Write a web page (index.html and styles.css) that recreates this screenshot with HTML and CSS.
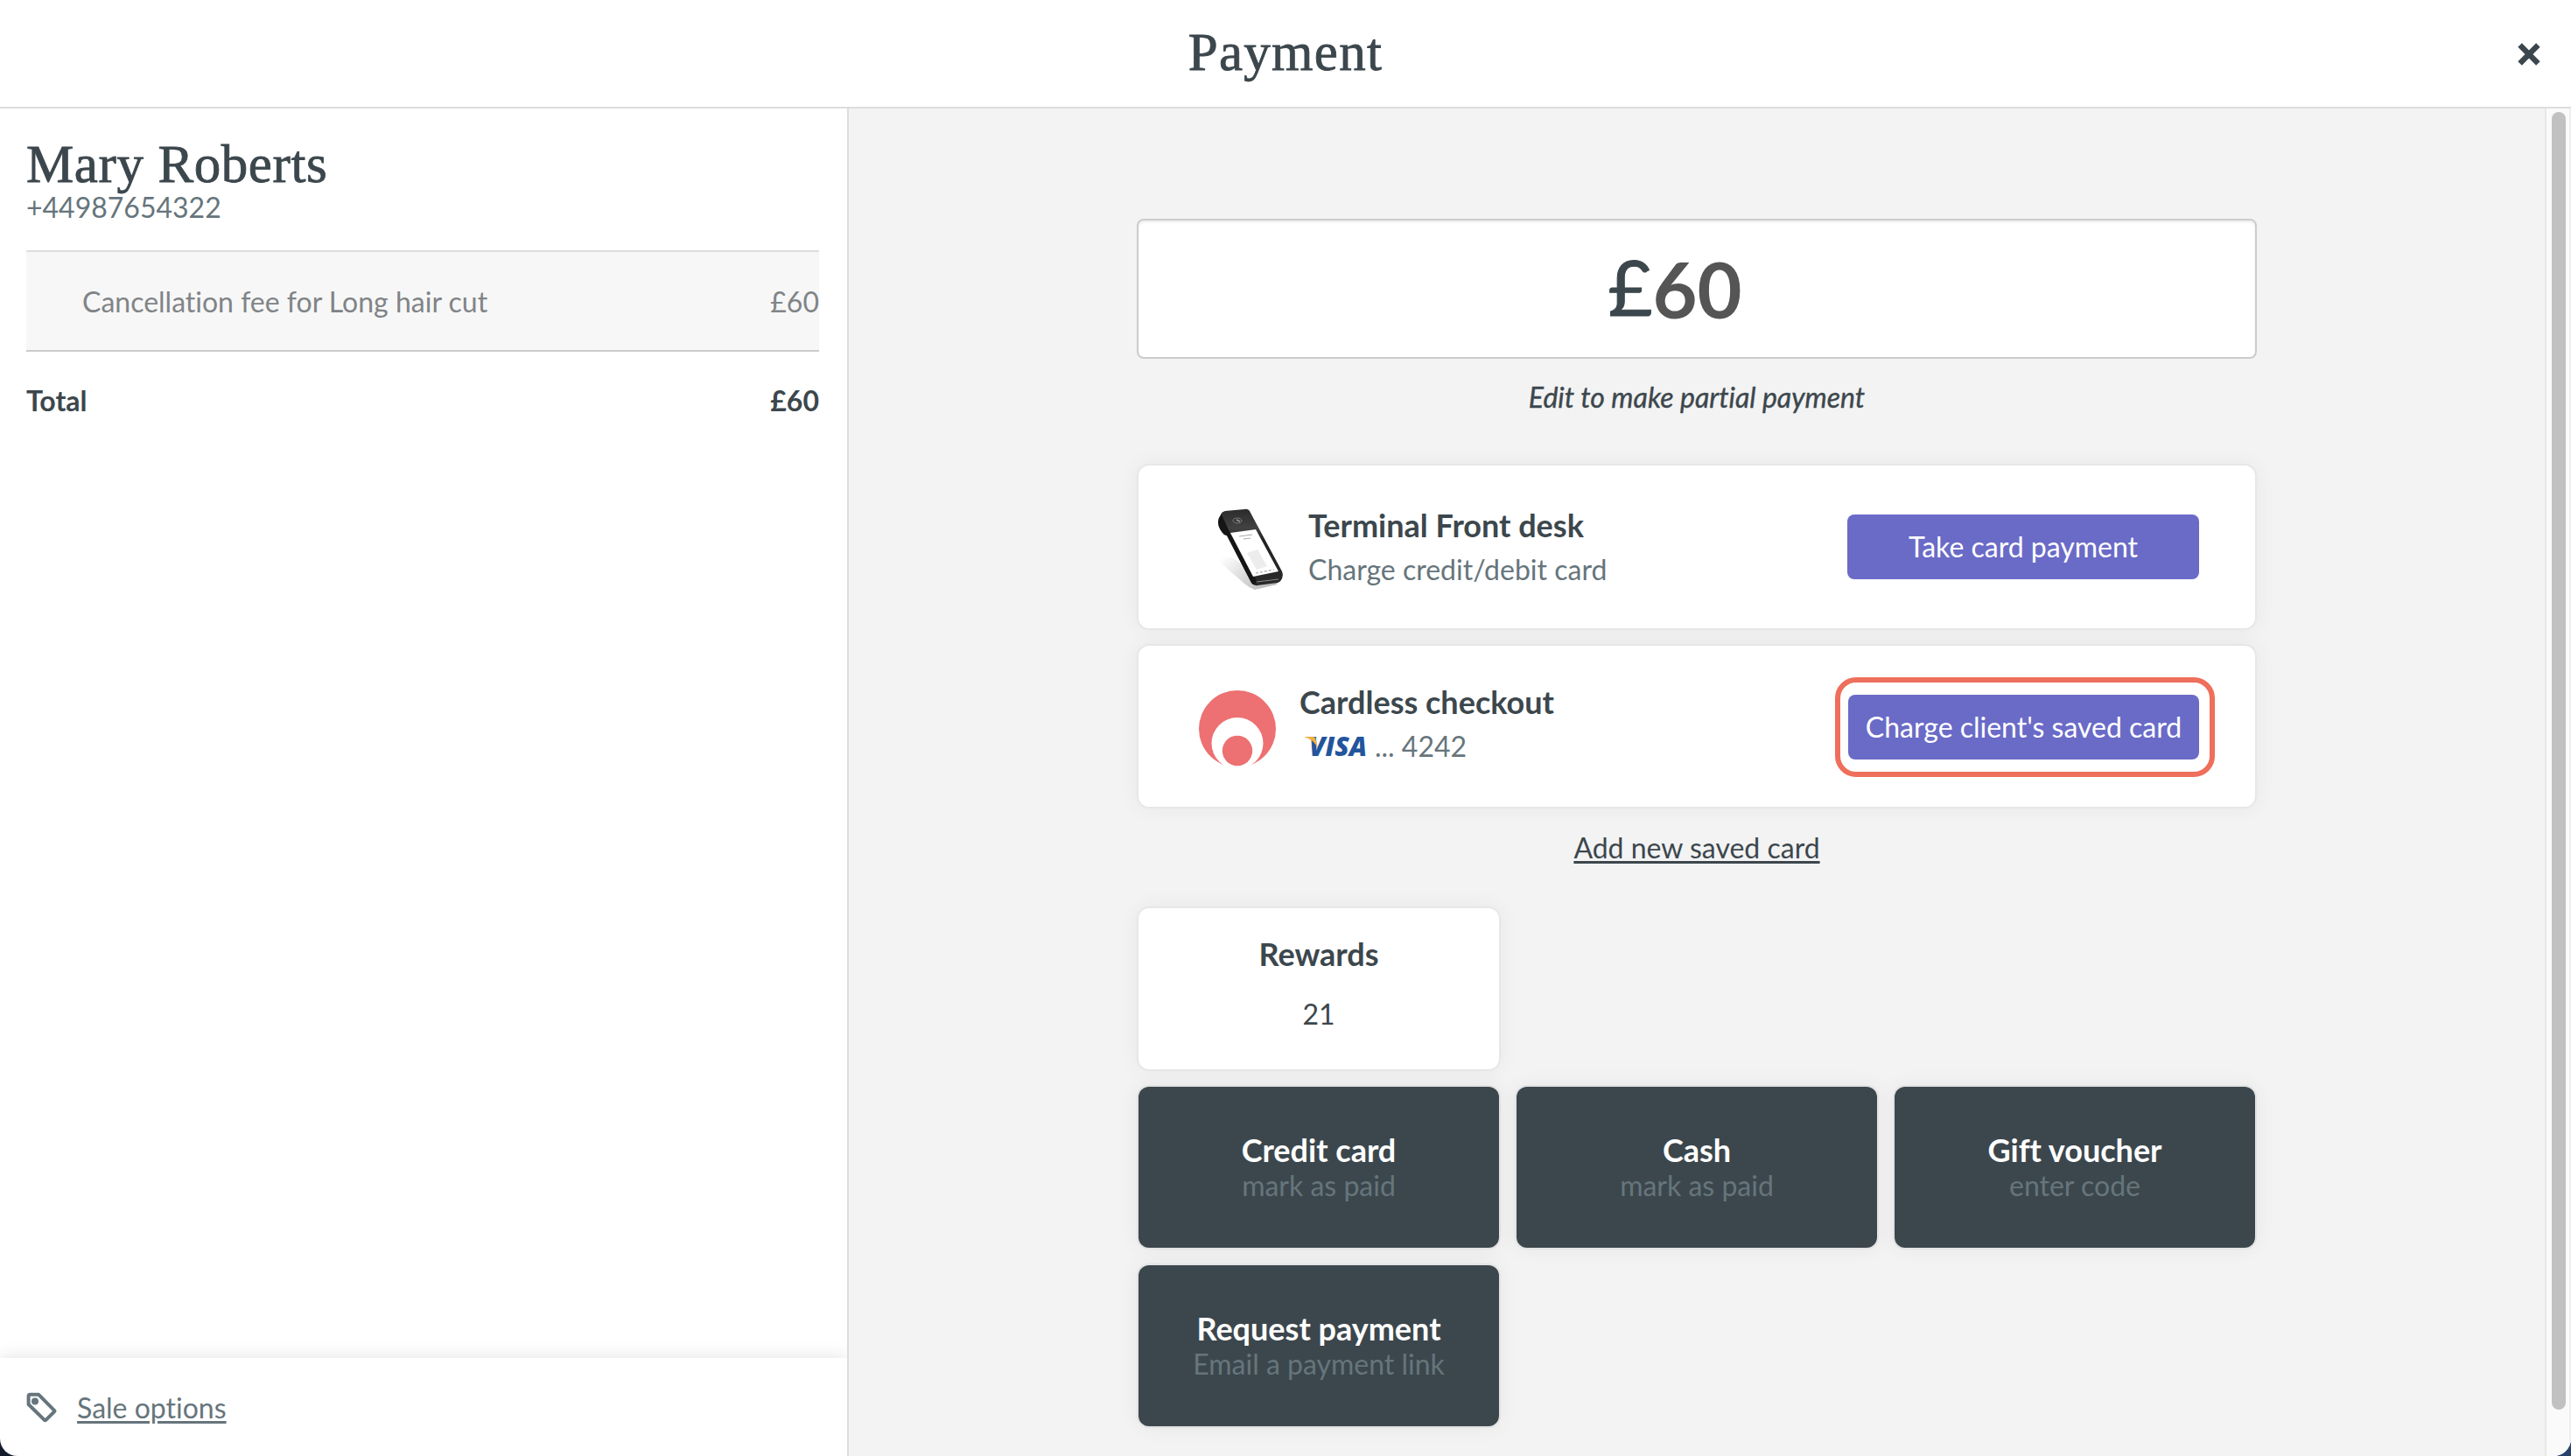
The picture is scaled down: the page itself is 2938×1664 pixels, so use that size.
FILE: index.html
```html
<!DOCTYPE html>
<html lang="en">
<head>
    <meta charset="UTF-8">
    <meta name="viewport" content="width=device-width, initial-scale=1.0">
    <title>Payment</title>
    <link rel="stylesheet" href="styles.css">
</head>
<body>
    <div class="app">
        <header class="header">
            <h1>Payment</h1>
            <button class="close" aria-label="Close">
                <svg width="28" height="28" viewBox="0 0 28 28">
                    <path d="M3.6 3.6L24.4 24.4M24.4 3.6L3.6 24.4" fill="none" stroke="#3c474d" stroke-width="6.4"/>
                </svg>
            </button>
        </header>

        <div class="content">
            <aside class="sidebar">
                <div class="sale">
                    <h2>Mary Roberts</h2>
                    <p class="phone">+44987654322</p>
                    <div class="item">
                        <span>Cancellation fee for Long hair cut</span>
                        <span>£60</span>
                    </div>
                    <div class="total">
                        <span>Total</span>
                        <span>£60</span>
                    </div>
                </div>
                <div class="options">
                    <svg width="36" height="36" viewBox="0 0 36 36">
                        <path d="M4.5 2.8H14.2L32 20.8Q32.8 21.6 32 22.4L22.4 31.9Q21.6 32.7 20.8 31.9L2.6 14V4.8Q2.6 2.8 4.5 2.8Z" fill="none" stroke="#66757c" stroke-width="4" stroke-linejoin="round"/>
                        <circle cx="10" cy="10.5" r="4" fill="#66757c"/>
                    </svg>
                    <a href="#">Sale options</a>
                </div>
            </aside>

            <main class="main">
                <div class="panel">
                    <div class="amount"><span class="currency">£</span><span class="value">60</span></div>
                    <p class="hint">Edit to make partial payment</p>

                    <div class="card terminal">
                        <div class="card-icon">
                            <svg width="92" height="96" viewBox="0 0 92 96">
                                <defs>
                                    <linearGradient id="shade" x1="0" y1="0.2" x2="1" y2="0.8">
                                        <stop offset="0" stop-color="#fff"/>
                                        <stop offset="1" stop-color="#999"/>
                                    </linearGradient>
                                    <linearGradient id="shell" x1="0" y1="0" x2="0" y2="1">
                                        <stop offset="0" stop-color="#2b2b2b"/>
                                        <stop offset="0.25" stop-color="#424242"/>
                                        <stop offset="0.4" stop-color="#222"/>
                                        <stop offset="1" stop-color="#2a2a2a"/>
                                    </linearGradient>
                                </defs>
                                <path d="M9 60Q24 54 38 66L80 86L79 90L54 96Q48 94 42 89Z" fill="url(#shade)" opacity="0.7"/>
                                <path d="M15 10Q16 7 20 6L42 4Q47 3 49 8L85 75Q87 80 84 85Q83 87 80 88L57 91Q53 92 50 88L22 34L19 33Q12 26 12 19Z" fill="url(#shell)"/>
                                <path d="M12 19Q12 13 16 10L26 32L56 86L54 90Q52 91 50 88L22 34L19 33Q13 27 12 19Z" fill="#151515"/>
                                <path d="M26 31L55 27L81 75L52 81Z" fill="#fff"/>
                                <path d="M45 54L57 50L68 69L56 73Z" fill="#ececec"/>
                                <path d="M36 35L51 33M41 38L49 37" stroke="#aaa" stroke-width="1"/>
                                <path d="M55 77L76 73" stroke="#aaa" stroke-width="1.2" stroke-dasharray="3 2"/>
                                <path d="M56 87L81 84" stroke="#888" stroke-width="1"/>
                                <ellipse cx="34" cy="17" rx="5" ry="3" fill="none" stroke="#777" stroke-width="1"/>
                                <path d="M33 16L37 18" stroke="#999" stroke-width="1.5"/>
                            </svg>
                        </div>
                        <div class="card-text">
                            <h3>Terminal Front desk</h3>
                            <p>Charge credit/debit card</p>
                        </div>
                        <button class="btn">Take card payment</button>
                    </div>

                    <div class="card cardless">
                        <div class="card-icon">
                            <svg width="88" height="88" viewBox="0 0 88 88">
                                <circle cx="44" cy="44" r="44" fill="#ed7072"/>
                                <circle cx="44" cy="60.5" r="29.5" fill="#fff"/>
                                <circle cx="44" cy="69" r="17.2" fill="#ed7072"/>
                            </svg>
                        </div>
                        <div class="card-text">
                            <h3>Cardless checkout</h3>
                            <p>
                                <svg class="visa" width="76" height="48" viewBox="0 -12 76 48">
                                    <text x="5" y="23" textLength="66" lengthAdjust="spacingAndGlyphs">VISA</text>
                                    <path d="M0 1H9Q12 1 12.500 4L15 14Q10 4 0 1.500Z" fill="#f2ae3d"/>
                                </svg>
                                ... 4242
                            </p>
                        </div>
                        <div class="highlight">
                            <button class="btn">Charge client's saved card</button>
                        </div>
                    </div>

                    <a class="add-card" href="#">Add new saved card</a>

                    <div class="tiles">
                        <div class="tile rewards">
                            <h3>Rewards</h3>
                            <p>21</p>
                        </div>
                        <div class="tile dark first">
                            <h3>Credit card</h3>
                            <p>mark as paid</p>
                        </div>
                        <div class="tile dark">
                            <h3>Cash</h3>
                            <p>mark as paid</p>
                        </div>
                        <div class="tile dark">
                            <h3>Gift voucher</h3>
                            <p>enter code</p>
                        </div>
                        <div class="tile dark">
                            <h3>Request payment</h3>
                            <p>Email a payment link</p>
                        </div>
                    </div>
                </div>
            </main>

            <div class="scrollbar">
                <div class="thumb"></div>
            </div>
        </div>
    </div>
</body>
</html>
```
FILE: styles.css
```css
* {
    margin: 0;
    padding: 0;
    box-sizing: border-box;
}

body {
    height: 100vh;
    overflow: hidden;
    background: linear-gradient(to right, #141c2b 50%, #27436b 50%);
    font-family: Lato, sans-serif;
    font-size: 32px;
    line-height: 40px;
    font-variant-ligatures: none;
    color: #3c474d;
}

a {
    color: inherit;
    text-decoration: underline;
    text-decoration-thickness: 3px;
    text-underline-offset: 3px;
}

button {
    border: none;
    background: none;
    font: inherit;
    cursor: pointer;
}

svg {
    display: block;
}

.app {
    display: flex;
    flex-direction: column;
    height: 100vh;
    background: #fff;
    border-radius: 0 0 20px 20px;
    overflow: hidden;
}

/* Header */
.header {
    display: grid;
    grid-template-columns: 1fr auto 1fr;
    align-items: center;
    height: 124px;
    padding: 0 34px;
    border-bottom: 2px solid #ddd;
}

.header h1,
.sale h2 {
    font-family: "Liberation Serif", serif;
    font-size: 61px;
    font-weight: normal;
    line-height: 59px;
    letter-spacing: 0.6px;
    -webkit-text-stroke: 0.8px #3c474d;
}

.header h1 {
    grid-column: 2;
    padding-bottom: 3px;
    letter-spacing: 1.3px;
}

.close {
    justify-self: end;
    padding-top: 2px;
}

.content {
    display: flex;
    flex: 1;
}

/* Sidebar */
.sidebar {
    display: flex;
    flex-direction: column;
    width: 970px;
    border-right: 2px solid #ddd;
}

.sale {
    flex: 1;
    padding: 34px 32px 0 30px;
}

.phone {
    color: #66757c;
}

.item,
.total {
    display: flex;
    justify-content: space-between;
}

.item {
    align-items: center;
    height: 116px;
    margin-top: 29px;
    padding-top: 2px;
    padding-left: 64px;
    background: #f7f7f7;
    border-top: 2px solid #ddd;
    border-bottom: 2px solid #ccc;
    color: #808487;
}

.total {
    padding-top: 36px;
    font-weight: bold;
}

.options {
    display: flex;
    align-items: center;
    gap: 22px;
    height: 112px;
    padding-top: 2px;
    padding-left: 30px;
    box-shadow: 0 0 20px rgba(0, 0, 0, 0.12);
    clip-path: inset(-30px 0 0 0);
    color: #66757c;
}

/* Main */
.main {
    flex: 1;
    background: #f3f3f3;
}

.panel {
    width: 1280px;
    margin: 0 auto;
    padding-top: 126px;
    text-align: center;
}

.amount {
    display: flex;
    justify-content: center;
    height: 160px;
    padding-right: 50px;
    background: #fff;
    border: 2px solid #ccc;
    border-radius: 8px;
    box-shadow: inset 0 2px 3px rgba(0, 0, 0, 0.08);
    font-size: 88px;
}

.currency {
    line-height: 150px;
    -webkit-text-stroke: 1px #3c474d;
}

.value {
    line-height: 157px;
    font-weight: bold;
    color: #555;
}

.hint {
    margin: 24px 0 56px;
    font-style: italic;
    -webkit-text-stroke: 0.4px #3c474d;
}

.card,
.tile {
    background: #fff;
    border: 2px solid #e7e7e7;
    border-radius: 14px;
    box-shadow: 0 0 24px rgba(0, 0, 0, 0.05);
}

.card {
    display: flex;
    align-items: center;
    height: 188px;
    padding-right: 64px;
    margin-bottom: 16px;
    text-align: left;
}

.terminal {
    height: 190px;
    padding-left: 79px;
}

.terminal .card-icon {
    margin-top: 1px;
}

.cardless {
    padding-left: 69px;
    padding-right: 46px;
    margin-bottom: 25px;
}

.card-text {
    flex: 1;
    line-height: 50px;
}

.terminal .card-text {
    margin-left: 23px;
}

.cardless .card-text {
    margin-left: 27px;
    margin-bottom: 6px;
}

.cardless .card-icon {
    margin-top: 6px;
}

h3 {
    font-size: 36px;
    font-weight: bold;
}

.card-text p {
    display: flex;
    margin-bottom: -2px;
    line-height: 52px;
    color: #66757c;
}

.visa {
    margin: 2px 4px 0 6px;
}

.visa text {
    font-family: "Open Sans", sans-serif;
    font-size: 30px;
    font-style: italic;
    font-weight: 800;
    fill: #22559c;
}

.btn {
    width: 402px;
    height: 74px;
    background: #6a6bc7;
    border-radius: 8px;
    color: #fff;
    text-align: center;
}

/* Ring around the saved card button */
.highlight {
    margin-top: 1px;
    padding: 14px 12px 14px 9px;
    border: 6px solid #ee6f5b;
    border-radius: 24px;
}

.highlight .btn {
    display: block;
    width: 401px;
}

.add-card {
    display: inline-block;
}

.tiles {
    display: grid;
    grid-template-columns: repeat(3, 1fr);
    grid-auto-rows: 188px;
    gap: 16px;
    margin-top: 47px;
}

.tile {
    display: flex;
    flex-direction: column;
    align-items: center;
    justify-content: center;
}

.rewards {
    gap: 29px;
    padding-bottom: 12px;
}

.dark {
    background: #3c474d;
    background-clip: padding-box;
    border-color: rgba(0, 0, 0, 0.05);
    color: #fff;
}

.dark p {
    margin-bottom: -2px;
    line-height: 42px;
    color: #66757c;
}

.first {
    grid-column-start: 1;
}

/* Scrollbar */
.scrollbar {
    width: 30px;
    padding: 4px 4px 53px 6px;
    background: #fafafa;
    border-left: 2px solid #e7e7e7;
    border-right: 2px solid #eee;
}

.thumb {
    width: 16px;
    height: 100%;
    background: #c1c1c1;
    border-radius: 8px;
}
```
